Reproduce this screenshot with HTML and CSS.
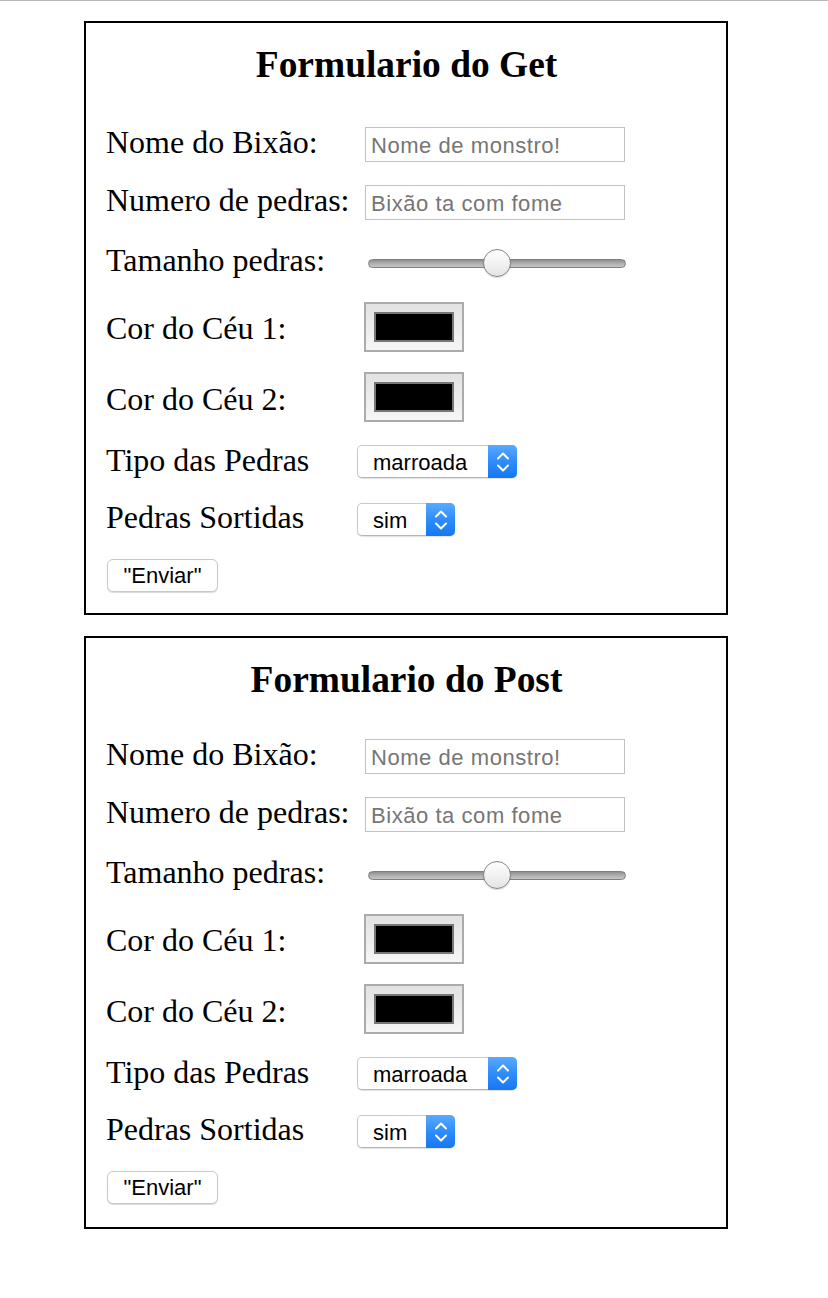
FILE: index.html
```html
<!DOCTYPE html>
<html lang="pt">
<head>
<meta charset="utf-8">
<title>Formularios</title>
<link rel="stylesheet" href="styles.css">
</head>
<body>
<div class="topline"></div>

<form class="panel" action="#" method="get">
  <h3 class="title">Formulario do Get</h3>
  <div class="row r1"><label class="lbl up5">Nome do Bixão:</label><input class="text" type="text" placeholder="Nome de monstro!"></div>
  <div class="row r2"><label class="lbl up5">Numero de pedras:</label><input class="text" type="text" placeholder="Bixão ta com fome"></div>
  <div class="row r3"><label class="lbl up7">Tamanho pedras:</label><input class="range" type="range" min="0" max="100" value="50"></div>
  <div class="row r4"><label class="lbl down2">Cor do Céu 1:</label><span class="color"><span class="swatch"></span></span></div>
  <div class="row r5"><label class="lbl down3">Cor do Céu 2:</label><span class="color"><span class="swatch"></span></span></div>
  <div class="row r6"><label class="lbl up3">Tipo das Pedras</label><span class="select wide"><select class="sel"><option>marroada</option></select><span class="arrow"><svg width="12" height="22" viewBox="0 0 12 22"><path d="M1 7.5 L6 2.5 L11 7.5 M1 14.5 L6 19.5 L11 14.5" fill="none" stroke="#fff" stroke-width="2" stroke-linecap="round" stroke-linejoin="round"/></svg></span></span></div>
  <div class="row r7"><label class="lbl up5">Pedras Sortidas</label><span class="select narrow"><select class="sel"><option>sim</option></select><span class="arrow"><svg width="12" height="22" viewBox="0 0 12 22"><path d="M1 7.5 L6 2.5 L11 7.5 M1 14.5 L6 19.5 L11 14.5" fill="none" stroke="#fff" stroke-width="2" stroke-linecap="round" stroke-linejoin="round"/></svg></span></span></div>
  <div class="row r8"><button class="btn" type="button">"Enviar"</button></div>
</form>

<form class="panel second" action="#" method="post">
  <h3 class="title">Formulario do Post</h3>
  <div class="row r1"><label class="lbl up5">Nome do Bixão:</label><input class="text" type="text" placeholder="Nome de monstro!"></div>
  <div class="row r2"><label class="lbl up5">Numero de pedras:</label><input class="text" type="text" placeholder="Bixão ta com fome"></div>
  <div class="row r3"><label class="lbl up7">Tamanho pedras:</label><input class="range" type="range" min="0" max="100" value="50"></div>
  <div class="row r4"><label class="lbl down2">Cor do Céu 1:</label><span class="color"><span class="swatch"></span></span></div>
  <div class="row r5"><label class="lbl down3">Cor do Céu 2:</label><span class="color"><span class="swatch"></span></span></div>
  <div class="row r6"><label class="lbl up3">Tipo das Pedras</label><span class="select wide"><select class="sel"><option>marroada</option></select><span class="arrow"><svg width="12" height="22" viewBox="0 0 12 22"><path d="M1 7.5 L6 2.5 L11 7.5 M1 14.5 L6 19.5 L11 14.5" fill="none" stroke="#fff" stroke-width="2" stroke-linecap="round" stroke-linejoin="round"/></svg></span></span></div>
  <div class="row r7"><label class="lbl up5">Pedras Sortidas</label><span class="select narrow"><select class="sel"><option>sim</option></select><span class="arrow"><svg width="12" height="22" viewBox="0 0 12 22"><path d="M1 7.5 L6 2.5 L11 7.5 M1 14.5 L6 19.5 L11 14.5" fill="none" stroke="#fff" stroke-width="2" stroke-linecap="round" stroke-linejoin="round"/></svg></span></span></div>
  <div class="row r8"><button class="btn" type="button">"Enviar"</button></div>
</form>
</body>
</html>
```
FILE: styles.css
```css
html, body {
  margin: 0;
  padding: 0;
  background: #fff;
}
body {
  font-family: "Liberation Serif", "Times New Roman", serif;
  color: #000;
}
.topline {
  height: 1px;
  background: #b9b9b9;
}
.panel {
  box-sizing: border-box;
  width: 644px;
  margin: 20px 0 0 84px;
  border: 2px solid #000;
  padding: 20px 20px 14px 21px;
}
.panel.second {
  margin-top: 21px;
  padding-bottom: 16px;
}
.title {
  margin: 0 0 29px 0;
  font-size: 37.44px;
  line-height: 43px;
  font-weight: bold;
  text-align: center;
}
.panel.second .title {
  margin-bottom: 26px;
}
.row {
  display: flex;
  align-items: center;
}
.r1 { height: 59px; }
.r2 { height: 57px; }
.r3 { height: 64px; }
.r4 { height: 64px; }
.r5 { height: 76px; }
.r6 { height: 53px; }
.r7 { height: 63px; }
.r8 { height: 48px; }

.lbl {
  flex: 0 0 250px;
  margin-left: -1px;
  font-size: 32px;
  line-height: 36px;
  white-space: nowrap;
}
.up3 { margin-bottom: 3px; }
.up5 { margin-bottom: 5px; }
.up7 { margin-bottom: 7px; }
.down2 { margin-top: 2px; }
.down3 { margin-top: 3px; }

.text {
  box-sizing: border-box;
  width: 260px;
  height: 35px;
  margin: 0 0 0 9px;
  padding: 2px 5px 0 5px;
  border: 1px solid #c2c2c2;
  border-radius: 0;
  background: #fff;
  font-family: "Liberation Sans", Arial, sans-serif;
  font-size: 22px;
  letter-spacing: 0.55px;
  color: #000;
  outline: none;
}
.text::placeholder {
  color: #767676;
}

.range {
  -webkit-appearance: none;
  appearance: none;
  width: 258px;
  height: 28px;
  margin: 0 0 0 12px;
  padding: 0;
  background: transparent;
}
.range::-webkit-slider-runnable-track {
  height: 9px;
  box-sizing: border-box;
  border: 1px solid #7f7f7f;
  border-radius: 4.5px;
  background: linear-gradient(to bottom, #8f8f8f 0%, #acacac 45%, #c6c6c6 100%);
}
.range::-webkit-slider-thumb {
  -webkit-appearance: none;
  appearance: none;
  box-sizing: border-box;
  width: 28px;
  height: 28px;
  margin-top: -10.5px;
  border-radius: 50%;
  border: 1.5px solid #868686;
  background: linear-gradient(to bottom, #fdfdfd 0%, #f2f2f2 50%, #e4e4e4 100%);
  box-shadow: 0 1px 1px rgba(0,0,0,0.15);
}

.color {
  box-sizing: border-box;
  display: flex;
  align-items: center;
  justify-content: center;
  width: 100px;
  height: 50px;
  margin-left: 8px;
  border: 2px solid #ababab;
  background: linear-gradient(to bottom, #e2e2e2 0%, #f6f6f6 100%);
}
.swatch {
  box-sizing: border-box;
  display: block;
  width: 80px;
  height: 30px;
  border: 2px solid #777;
  background: #000;
}

.select {
  position: relative;
  display: inline-block;
  height: 33px;
  margin-left: 1px;
}
.select.wide { width: 160px; }
.select.narrow { width: 98px; }
.sel {
  -webkit-appearance: none;
  appearance: none;
  box-sizing: border-box;
  width: 100%;
  height: 33px;
  margin: 0;
  padding: 2px 0 0 15px;
  border: 1px solid #c9c9c9;
  border-bottom-color: #b5b5b5;
  border-radius: 5px;
  background: #fff;
  box-shadow: 0 1px 1px rgba(0,0,0,0.12);
  font-family: "Liberation Sans", Arial, sans-serif;
  font-size: 22px;
  color: #000;
  outline: none;
}
.arrow {
  position: absolute;
  top: 0;
  right: 0;
  width: 29px;
  height: 33px;
  display: flex;
  align-items: center;
  justify-content: center;
  border-radius: 0 5px 5px 0;
  background: linear-gradient(to bottom, #5aaaff 0%, #2e8cfb 50%, #1677f0 100%);
  pointer-events: none;
}
.arrow svg {
  display: block;
}

.btn {
  box-sizing: border-box;
  width: 111px;
  height: 33px;
  margin: 0;
  padding: 2px 0 0 0;
  border: 1px solid #c8c8c8;
  border-radius: 6px;
  background: #fff;
  box-shadow: 0 1px 1px rgba(0,0,0,0.15);
  font-family: "Liberation Sans", Arial, sans-serif;
  font-size: 22px;
  color: #000;
}
```
